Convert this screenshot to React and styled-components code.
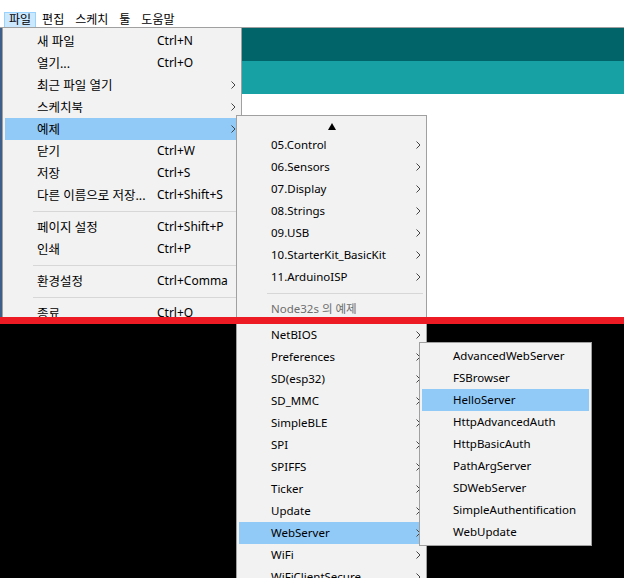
import React from 'react';
import styled, { createGlobalStyle } from 'styled-components';

const GlobalStyle = createGlobalStyle`
  html, body {
    margin: 0;
    padding: 0;
    background: #000;
  }
  body {
    font-family: "Noto Sans", "Noto Sans CJK KR", sans-serif;
    font-size: 11.5px;
    color: #000;
  }
`;

const Screen = styled.div`
  width: 624px;
  height: 578px;
  overflow: hidden;
  display: flex;
  flex-direction: column;
  background: #000;
`;

const TopShot = styled.div`
  position: relative;
  flex: none;
  height: 317px;
  overflow: hidden;
  background: #fff;
  display: flex;
  flex-direction: column;
`;

const CutLine = styled.div`
  flex: none;
  height: 7px;
  background: #ed1c24;
`;

const BottomShot = styled.div`
  position: relative;
  flex: 1;
  overflow: hidden;
  background: #000;
`;

const MenuBar = styled.div`
  flex: none;
  height: 28px;
  box-sizing: border-box;
  padding-left: 4px;
  display: flex;
  align-items: flex-end;
  gap: 1px;
  border-bottom: 1px solid #a0a0a0;
  font-size: 12px;
`;

const BarItem = styled.div`
  height: 14px;
  line-height: 13px;
  padding: 0 4px;
  border: 1px solid ${p => (p.$open ? '#99d1ff' : 'transparent')};
  border-bottom: none;
  background: ${p => (p.$open ? '#cce8ff' : 'transparent')};
`;

const Workspace = styled.div`
  flex: 1;
  display: flex;
  flex-direction: column;
  border-left: 2px solid #3e5f8a;
`;

const Toolbar = styled.div`
  flex: none;
  height: 33px;
  background: ${p => p.$tone};
`;

const Editor = styled.div`
  flex: 1;
  background: #fff;
`;

const Menu = styled.div`
  position: absolute;
  top: ${p => p.$top}px;
  left: ${p => p.$left}px;
  width: ${p => p.$width}px;
  box-sizing: border-box;
  padding: ${p => (p.$cut ? '0 2px' : '2px')};
  background: #f2f2f2;
  border: 1px solid #a0a0a0;
  border-top: ${p => (p.$cut ? 'none' : '1px solid #a0a0a0')};
  display: flex;
  flex-direction: column;
  z-index: ${p => p.$layer || 1};
`;

const Item = styled.div`
  flex: none;
  height: 22px;
  box-sizing: border-box;
  padding-bottom: 2px;
  display: flex;
  align-items: center;
  padding-left: ${p => p.$indent || 32}px;
  background: ${p => (p.$active ? '#91c9f7' : 'transparent')};
  color: ${p => (p.$disabled ? '#6d6d6d' : '#000')};
  white-space: nowrap;
`;

const Label = styled.span`
  flex: none;
  width: ${p => (p.$width ? `${p.$width}px` : 'auto')};
  font-size: ${p => (p.$ko ? '12.5px' : 'inherit')};
`;

const Shortcut = styled.span`
  flex: none;
  font-size: 12px;
`;

const Arrow = styled.span`
  margin-left: auto;
  margin-right: 3px;
  margin-top: 2px;
  display: flex;
  align-items: center;
`;

const Separator = styled.div`
  flex: none;
  height: 10px;
  display: flex;
  align-items: center;
  padding: 0 1px 0 28px;
  &::after {
    content: '';
    flex: 1;
    height: 1px;
    background: #d7d7d7;
  }
`;

const ScrollUp = styled.div`
  flex: none;
  height: 16px;
  display: flex;
  align-items: center;
  justify-content: center;
`;

const Chevron = () => (
  <svg width="5" height="8" viewBox="0 0 5 8">
    <path d="M0.5 0.5 L4 4 L0.5 7.5" fill="none" stroke="#444" strokeWidth="1" />
  </svg>
);

const fileMenu = [
  { label: '새 파일', key: 'Ctrl+N' },
  { label: '열기...', key: 'Ctrl+O' },
  { label: '최근 파일 열기', sub: true },
  { label: '스케치북', sub: true },
  { label: '예제', sub: true, active: true },
  { label: '닫기', key: 'Ctrl+W' },
  { label: '저장', key: 'Ctrl+S' },
  { label: '다른 이름으로 저장...', key: 'Ctrl+Shift+S' },
  { sep: true },
  { label: '페이지 설정', key: 'Ctrl+Shift+P' },
  { label: '인쇄', key: 'Ctrl+P' },
  { sep: true },
  { label: '환경설정', key: 'Ctrl+Comma' },
  { sep: true },
  { label: '종료', key: 'Ctrl+Q' },
];

const builtIn = [
  '05.Control',
  '06.Sensors',
  '07.Display',
  '08.Strings',
  '09.USB',
  '10.StarterKit_BasicKit',
  '11.ArduinoISP',
];

const boardExamples = [
  'NetBIOS',
  'Preferences',
  'SD(esp32)',
  'SD_MMC',
  'SimpleBLE',
  'SPI',
  'SPIFFS',
  'Ticker',
  'Update',
  'WebServer',
  'WiFi',
  'WiFiClientSecure',
];

const webServer = [
  'AdvancedWebServer',
  'FSBrowser',
  'HelloServer',
  'HttpAdvancedAuth',
  'HttpBasicAuth',
  'PathArgServer',
  'SDWebServer',
  'SimpleAuthentification',
  'WebUpdate',
];

export default function App() {
  return (
    <>
      <GlobalStyle />
      <Screen>
        <TopShot>
          <MenuBar>
            <BarItem $open>파일</BarItem>
            <BarItem>편집</BarItem>
            <BarItem>스케치</BarItem>
            <BarItem>툴</BarItem>
            <BarItem>도움말</BarItem>
          </MenuBar>
          <Workspace>
            <Toolbar $tone="#006468" />
            <Toolbar $tone="#17a1a5" />
            <Editor />
          </Workspace>

          <Menu $top={27} $left={2} $width={240}>
            {fileMenu.map((it, i) =>
              it.sep ? (
                <Separator key={i} />
              ) : (
                <Item key={i} $active={it.active}>
                  <Label $width={120} $ko>{it.label}</Label>
                  {it.key && <Shortcut>{it.key}</Shortcut>}
                  {it.sub && (
                    <Arrow>
                      <Chevron />
                    </Arrow>
                  )}
                </Item>
              )
            )}
          </Menu>

          <Menu $top={115} $left={236} $width={191} $layer={2}>
            <ScrollUp>
              <svg width="8" height="7" viewBox="0 0 8 7">
                <polygon points="4,0 8,7 0,7" fill="#000" />
              </svg>
            </ScrollUp>
            {builtIn.map(name => (
              <Item key={name}>
                <Label>{name}</Label>
                <Arrow>
                  <Chevron />
                </Arrow>
              </Item>
            ))}
            <Separator />
            <Item $disabled>
              <Label>Node32s 의 예제</Label>
            </Item>
          </Menu>
        </TopShot>

        <CutLine />

        <BottomShot>
          <Menu $top={0} $left={236} $width={191} $cut>
            {boardExamples.map(name => (
              <Item key={name} $active={name === 'WebServer'}>
                <Label>{name}</Label>
                <Arrow>
                  <Chevron />
                </Arrow>
              </Item>
            ))}
          </Menu>

          <Menu $top={18} $left={419} $width={173} $layer={2}>
            {webServer.map(name => (
              <Item key={name} $indent={31} $active={name === 'HelloServer'}>
                <Label>{name}</Label>
              </Item>
            ))}
          </Menu>
        </BottomShot>
      </Screen>
    </>
  );
}
